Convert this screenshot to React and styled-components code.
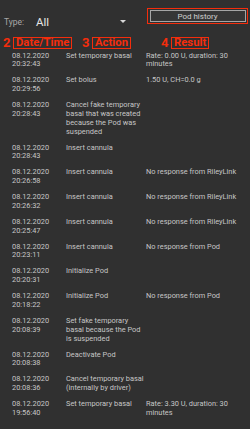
import React from 'react'
import styled, { createGlobalStyle } from 'styled-components'

const GlobalStyle = createGlobalStyle`
    html, body {
        margin: 0;
        padding: 0;
        background: #303030;
    }
    body {
        font-family: Roboto, "Noto Sans", sans-serif;
        width: 250px;
        height: 429px;
        overflow: hidden;
    }
`;

const Screen = styled.div`
    display: flex;
    flex-direction: column;
    width: 250px;
    height: 429px;
    background: #303030;
`;

const Toolbar = styled.div`
    display: flex;
    flex-direction: row;
    align-items: flex-start;
    height: 16px;
    margin-top: 8px;
    padding: 0 2px 0 4px;
`;

const Selector = styled.div`
    display: flex;
    flex-direction: row;
    align-items: center;
    flex: 1;
    height: 12px;
    margin-top: 8px;
`;

const TypeLabel = styled.span`
    font-size: 8.5px;
    color: #a8a8a8;
    width: 32px;
`;

const TypeValue = styled.span`
    font-size: 11.5px;
    color: #e6e6e6;
    flex: 1;
`;

const Caret = styled.span`
    width: 0;
    height: 0;
    border-left: 3px solid transparent;
    border-right: 3px solid transparent;
    border-top: 3px solid #d8d8d8;
    margin-right: 21px;
    margin-top: -1px;
`;

const Mark = styled.div`
    display: flex;
    align-items: center;
    border: 1.5px solid #f42d0c;
    padding: ${p => p.$pad || '0 2px'};
    height: ${p => p.$h || 'auto'};
    box-sizing: border-box;
`;

const PodButton = styled.div`
    display: flex;
    align-items: center;
    justify-content: center;
    width: 96px;
    height: 12px;
    box-sizing: border-box;
    border: 1px solid #a6a6a6;
    background: #363636;
    color: #cfcfcf;
    font-size: 8px;
`;

const Legend = styled.div`
    display: grid;
    grid-template-columns: 79px 79px 1fr;
    margin-top: 11px;
    padding-left: 3px;
    height: 14px;
`;

const LegendItem = styled.div`
    display: flex;
    flex-direction: row;
    align-items: center;
    gap: 3px;
    color: #f42d0c;
    font-weight: 700;
`;

const LegendNumber = styled.span`
    font-size: 13px;
    width: 7px;
`;

const LegendText = styled.span`
    font-size: 11.3px;
    line-height: 10px;
`;

const List = styled.div`
    display: flex;
    flex-direction: column;
    margin-top: -1px;
`;

const Row = styled.div`
    display: grid;
    grid-template-columns: 54px 80px 1fr;
    padding: 3.6px 8px 3.6px 12px;
    font-size: 7.4px;
    line-height: 8.8px;
    color: #c6c6c6;
`;

const Cell = styled.div`
    padding-right: 1px;
`;

const entries = [
    ['08.12.2020', '20:32:43', 'Set temporary basal', 'Rate: 0.00 U, duration: 30 minutes'],
    ['08.12.2020', '20:29:56', 'Set bolus', '1.50 U, CH=0.0 g'],
    ['08.12.2020', '20:28:43', 'Cancel fake temporary basal that was created because the Pod was suspended', ''],
    ['08.12.2020', '20:28:43', 'Insert cannula', ''],
    ['08.12.2020', '20:26:58', 'Insert cannula', 'No response from RileyLink'],
    ['08.12.2020', '20:26:32', 'Insert cannula', 'No response from RileyLink'],
    ['08.12.2020', '20:25:47', 'Insert cannula', 'No response from RileyLink'],
    ['08.12.2020', '20:23:11', 'Insert cannula', 'No response from Pod'],
    ['08.12.2020', '20:20:31', 'Initialize Pod', ''],
    ['08.12.2020', '20:18:22', 'Initialize Pod', 'No response from Pod'],
    ['08.12.2020', '20:08:39', 'Set fake temporary basal because the Pod is suspended', ''],
    ['08.12.2020', '20:08:38', 'Deactivate Pod', ''],
    ['08.12.2020', '20:08:36', 'Cancel temporary basal (internally by driver)', ''],
    ['08.12.2020', '19:56:40', 'Set temporary basal', 'Rate: 3.30 U, duration: 30 minutes'],
];

const App = () => {
    return (
        <Screen>
            <GlobalStyle />
            <Toolbar>
                <Selector>
                    <TypeLabel>Type:</TypeLabel>
                    <TypeValue>All</TypeValue>
                    <Caret />
                </Selector>
                <Mark $pad="0 1.5px" $h="16px">
                    <PodButton>Pod history</PodButton>
                </Mark>
            </Toolbar>
            <Legend>
                <LegendItem>
                    <LegendNumber>2</LegendNumber>
                    <Mark><LegendText>Date/Time</LegendText></Mark>
                </LegendItem>
                <LegendItem>
                    <LegendNumber>3</LegendNumber>
                    <Mark><LegendText>Action</LegendText></Mark>
                </LegendItem>
                <LegendItem>
                    <LegendNumber>4</LegendNumber>
                    <Mark><LegendText>Result</LegendText></Mark>
                </LegendItem>
            </Legend>
            <List>
                {entries.map((e, i) => (
                    <Row key={i}>
                        <Cell>{e[0]}<br />{e[1]}</Cell>
                        <Cell>{e[2]}</Cell>
                        <Cell>{e[3]}</Cell>
                    </Row>
                ))}
            </List>
        </Screen>
    )
}

export default App;
